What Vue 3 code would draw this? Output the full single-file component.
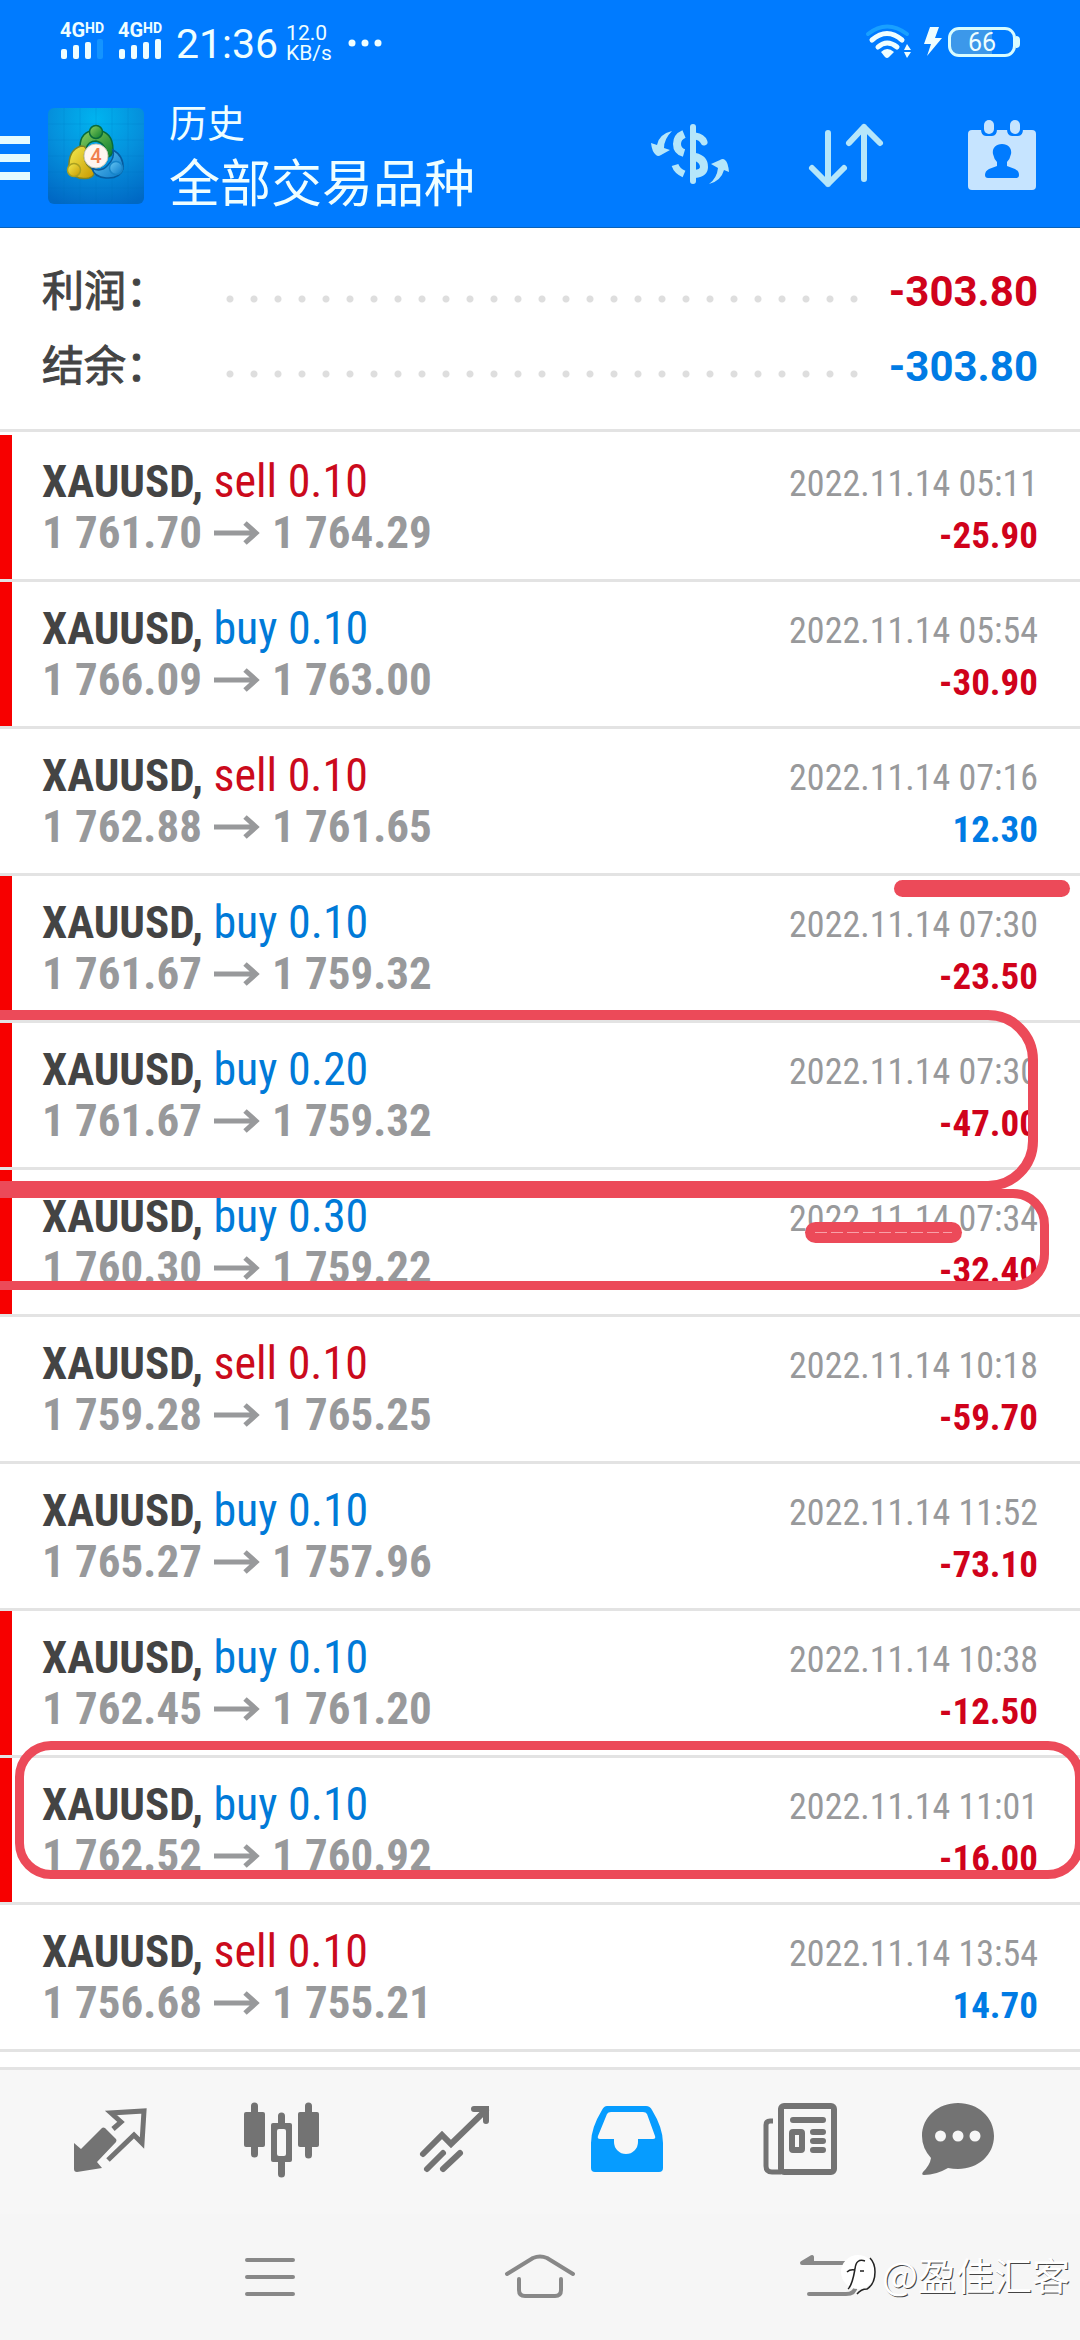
<script setup>
const summary = [
  { label: '利润：', value: '-303.80', tone: 'loss' },
  { label: '结余：', value: '-303.80', tone: 'gain' },
]

const deals = [
  { side: 'sell', lots: '0.10', open: '1 761.70', close: '1 764.29', time: '2022.11.14 05:11', profit: '-25.90', marked: true },
  { side: 'buy', lots: '0.10', open: '1 766.09', close: '1 763.00', time: '2022.11.14 05:54', profit: '-30.90', marked: true },
  { side: 'sell', lots: '0.10', open: '1 762.88', close: '1 761.65', time: '2022.11.14 07:16', profit: '12.30', marked: false },
  { side: 'buy', lots: '0.10', open: '1 761.67', close: '1 759.32', time: '2022.11.14 07:30', profit: '-23.50', marked: true },
  { side: 'buy', lots: '0.20', open: '1 761.67', close: '1 759.32', time: '2022.11.14 07:30', profit: '-47.00', marked: true },
  { side: 'buy', lots: '0.30', open: '1 760.30', close: '1 759.22', time: '2022.11.14 07:34', profit: '-32.40', marked: true },
  { side: 'sell', lots: '0.10', open: '1 759.28', close: '1 765.25', time: '2022.11.14 10:18', profit: '-59.70', marked: false },
  { side: 'buy', lots: '0.10', open: '1 765.27', close: '1 757.96', time: '2022.11.14 11:52', profit: '-73.10', marked: false },
  { side: 'buy', lots: '0.10', open: '1 762.45', close: '1 761.20', time: '2022.11.14 10:38', profit: '-12.50', marked: true },
  { side: 'buy', lots: '0.10', open: '1 762.52', close: '1 760.92', time: '2022.11.14 11:01', profit: '-16.00', marked: true },
  { side: 'sell', lots: '0.10', open: '1 756.68', close: '1 755.21', time: '2022.11.14 13:54', profit: '14.70', marked: false },
]

const tone = (profit) => (profit.startsWith('-') ? 'loss' : 'gain')
</script>

<template>
  <div class="screen">
    <header class="top">
      <div class="status">
        <div v-for="sim in 2" :key="sim" class="sim">
          <span class="net">4G<sup>HD</sup></span>
          <svg class="bars" viewBox="0 0 44 20" aria-hidden="true">
            <rect x="1" y="10" width="6" height="10" rx="2" />
            <rect x="13" y="6" width="6" height="14" rx="2" />
            <rect x="25" y="3" width="6" height="17" rx="2" />
            <rect x="37" y="0" width="6" height="20" rx="2" :class="{ faint: sim === 1 }" />
          </svg>
        </div>
        <span class="clock">21:36</span>
        <span class="speed"><span>12.0</span><span>KB/s</span></span>
        <svg class="more" viewBox="0 0 36 8" aria-hidden="true">
          <circle cx="4" cy="4" r="3.5" /><circle cx="17" cy="4" r="3.5" /><circle cx="30" cy="4" r="3.5" />
        </svg>
        <svg class="wifi" viewBox="0 0 48 36" aria-hidden="true">
          <g fill="none" stroke-linecap="round" stroke-width="5">
            <path d="M3 10Q22-5 42 10" stroke="#18a0ff" stroke-width="4" />
            <path d="M7 16Q22 3 37 16" stroke="#effeff" />
            <path d="M13 23Q22 15 32 23" stroke="#effeff" />
          </g>
          <path d="M16 28Q22 22 29 28L24 33Q22 35 20 33Z" />
          <path d="M39 26l3-6 4 6zM39 28h7l-4 6z" />
        </svg>
        <svg class="bolt" viewBox="0 0 18 30" aria-hidden="true"><path d="M6 0H15L11 11H18L3 29L7 17H0Z" /></svg>
        <span class="battery">66</span>
      </div>

      <div class="toolbar">
        <button class="menu" aria-label="菜单"><i></i><i></i><i></i></button>
        <svg class="logo" viewBox="0 0 96 96" aria-hidden="true">
          <defs>
            <radialGradient id="tile" cx="50%" cy="12%" r="95%">
              <stop offset="0" stop-color="#00b4f0" /><stop offset=".5" stop-color="#0590dc" /><stop offset="1" stop-color="#0068c4" />
            </radialGradient>
            <linearGradient id="green" x1="0" y1="0" x2="1" y2="1"><stop offset="0" stop-color="#8ed060" /><stop offset="1" stop-color="#087c2c" /></linearGradient>
            <linearGradient id="gold" x1="0" y1="0" x2="1" y2="1"><stop offset="0" stop-color="#f4ec50" /><stop offset="1" stop-color="#c89800" /></linearGradient>
            <linearGradient id="azure" x1="0" y1="0" x2="1" y2="1"><stop offset="0" stop-color="#68c8f4" /><stop offset="1" stop-color="#0878c8" /></linearGradient>
          </defs>
          <rect width="96" height="96" rx="6" fill="url(#tile)" />
          <path d="M16 0V96M32 0V96M48 0V96M64 0V96M80 0V96M0 16H96M0 32H96M0 48H96M0 64H96M0 80H96" stroke="#0070c0" stroke-opacity=".18" />
          <g stroke-width="1.5">
            <path d="M32 39Q32 23 48 22Q65 23 65 42Q64 49 59 49Q58 35 48 33Q40 33 38 41Z" fill="url(#green)" stroke="#096b3b" />
            <path d="M33 38Q20 42 21 60Q26 73 41 70Q48 68 45 62Q34 55 37 44Q40 38 33 38Z" fill="url(#gold)" stroke="#7f8424" />
            <path d="M65 42Q76 48 75 61Q72 71 58 70Q46 69 44 60Q53 65 60 57Q67 50 65 42Z" fill="url(#azure)" stroke="#075b9e" />
            <circle cx="48" cy="24" r="6.5" fill="url(#green)" stroke="#096b3b" />
            <circle cx="26" cy="62" r="6.5" fill="url(#gold)" stroke="#aaa020" />
            <circle cx="68" cy="60" r="6.5" fill="url(#azure)" stroke="#1684c8" />
          </g>
          <circle cx="48" cy="48" r="12" fill="#fff6f0" stroke="#c8c8b8" />
          <text x="48" y="55" text-anchor="middle" class="four">4</text>
        </svg>
        <div class="titles">
          <span class="subtitle">历史</span>
          <h1>全部交易品种</h1>
        </div>
        <button class="tool" aria-label="货币">
          <svg viewBox="0 0 96 96">
            <path d="M30 23Q17 26 15 37L9 35Q10 44 14 47Q16 49 19 47L28 42L22 40Q22 31 30 23ZM67 76Q79 73 82 62L87 64Q86 54 83 52Q81 50 78 52L69 56L76 60Q75 70 67 76Z" fill="#b5e6fa" />
            <g fill="none" stroke="#b5e6fa">
              <path d="M51 19V73" stroke-width="6" stroke-linecap="round" />
              <path d="M42 26Q35 29 35 36Q35 43 42 45M53 49Q62 51 62 59Q62 65 53 66" stroke-width="8" />
              <path d="M53 28Q60 29 62 34" stroke-width="7" stroke-linecap="round" />
              <path d="M33 57Q35 63 42 66" stroke-width="7" />
            </g>
          </svg>
        </button>
        <button class="tool" aria-label="排序">
          <svg viewBox="0 0 96 96" fill="none" stroke="#b5e6fa" stroke-width="6" stroke-linecap="round" stroke-linejoin="round">
            <path d="M30 25V76M14 60L30 76L46 60M66 71V19M51 35L66 19L82 35" />
          </svg>
        </button>
        <button class="tool" aria-label="日期">
          <svg viewBox="0 0 96 96">
            <rect x="14" y="22" width="68" height="60" rx="4" fill="#c6e4ff" />
            <path d="M27 21H43Q43 28 38 28H32Q27 28 27 21ZM53 21H69Q69 28 64 28H58Q53 28 53 21Z" fill="#007bff" />
            <rect x="30" y="12" width="10" height="14" rx="5" fill="#c6e4ff" />
            <rect x="56" y="12" width="10" height="14" rx="5" fill="#c6e4ff" />
            <path d="M48 36C55 36 58 41 57 46Q56 51 53 54V58L61 61Q65 63 65 67Q65 70 62 70H34Q31 70 31 67Q31 63 35 61L43 58V54Q40 51 39 46C38 41 41 36 48 36Z" fill="#007bff" />
          </svg>
        </button>
      </div>
    </header>

    <main>
      <dl class="summary">
        <div v-for="row in summary" :key="row.label">
          <dt>{{ row.label }}</dt>
          <dd :class="row.tone">{{ row.value }}</dd>
        </div>
      </dl>

      <ul class="deals">
        <li v-for="(deal, i) in deals" :key="i" :class="{ marked: deal.marked }">
          <div class="left">
            <p class="order"><b>XAUUSD,</b> <span :class="deal.side">{{ deal.side }} {{ deal.lots }}</span></p>
            <p class="prices">
              <span>{{ deal.open }}</span>
              <svg viewBox="0 0 46 24" aria-hidden="true"><path d="M0 12H42M31 2L42 12L31 22" /></svg>
              <span>{{ deal.close }}</span>
            </p>
          </div>
          <div class="right">
            <time>{{ deal.time }}</time>
            <strong :class="tone(deal.profit)">{{ deal.profit }}</strong>
          </div>
        </li>
      </ul>

      <div class="pen dash-a"></div>
      <div class="pen ring ring-a"></div>
      <div class="pen ring ring-b"></div>
      <div class="pen dash-b"></div>
      <div class="pen ring ring-c"></div>
    </main>

    <nav class="tabs">
      <button aria-label="行情">
        <svg viewBox="0 0 96 96">
          <path d="M12 49L19 55L40 34Q41 33 43 34L54 45Q55 46 54 48L35 68L40 74L15 78Q12 78 12 75Z" />
          <path d="M51 35L59 28L49 19L82 17L80 49L72 41L46 66" fill="none" stroke="#737373" stroke-width="5" />
        </svg>
      </button>
      <button aria-label="图表">
        <svg viewBox="0 0 96 96">
          <path d="M20.5 12V60M74.5 12V61M47.5 22V80" stroke="#737373" stroke-width="7" stroke-linecap="round" />
          <rect x="10" y="18" width="21" height="35" rx="2" /><rect x="64" y="18" width="21" height="35" rx="2" />
          <rect x="37" y="29" width="21" height="39" rx="2" /><rect x="43" y="35" width="9" height="27" rx="2" fill="#f7f7f7" />
        </svg>
      </button>
      <button aria-label="交易">
        <svg viewBox="0 0 96 96">
          <path d="M17 60L36 41L45 50L80 16M68 15H80V27M21 75L37 59M37 75L54 59" fill="none" stroke="#737373" stroke-width="6" stroke-linecap="round" />
        </svg>
      </button>
      <button aria-label="历史" aria-current="page">
        <svg viewBox="0 0 96 96">
          <path d="M29 12H68Q72 12 74 16Q85 34 85 49V74Q85 78 81 78H17Q13 78 13 74V49Q13 34 24 16Q26 12 29 12ZM33 18Q30 18 29 20L20 42Q19 45 22 45H36V48A12 12 0 0 0 60 48V45H75Q78 45 77 42L69 20Q68 18 65 18Z" fill="#069cff" fill-rule="evenodd" />
        </svg>
      </button>
      <button aria-label="新闻">
        <svg viewBox="0 0 96 96">
          <g fill="none" stroke="#737373" stroke-width="6">
            <rect x="31" y="12" width="53" height="66" rx="3" />
            <path d="M23 27H20Q16 27 16 31V72Q16 78 22 78H31" stroke-width="5" />
            <path d="M43 26H73M63 38H73M63 47H73M63 56H73" stroke-linecap="round" />
            <rect x="42" y="38" width="10" height="18" rx="1" />
          </g>
        </svg>
      </button>
      <button aria-label="消息">
        <svg viewBox="0 0 96 96">
          <path d="M36 9C56 9 72 23 72 42S56 75 36 75Q31 75 26 74Q14 81 2 81Q-1 81 1 78Q8 71 9 64Q0 54 0 42C0 23 16 9 36 9Z" />
          <g fill="#f7f7f7"><circle cx="18.5" cy="42" r="5.5" /><circle cx="36" cy="42" r="5.5" /><circle cx="53" cy="42" r="5.5" /></g>
        </svg>
      </button>
    </nav>

    <footer class="system">
      <button aria-label="最近任务">
        <svg viewBox="0 0 96 96"><path d="M25 31H71M25 48H71M25 65H71" /></svg>
      </button>
      <button aria-label="主屏幕">
        <svg viewBox="0 0 96 96"><path d="M15 45L41 29Q48 26 55 29L81 45M27 50V61Q27 67 33 67H63Q69 67 69 61V50" /></svg>
      </button>
      <button aria-label="返回">
        <svg viewBox="0 0 96 96"><path d="M42 34H84Q94 34 94 44V55Q94 65 84 65H47" /><path d="M40 34L50 28V34Z" fill="#888" /></svg>
      </button>
      <div class="watermark">
        <svg viewBox="0 0 40 44" aria-hidden="true">
          <circle cx="21" cy="20" r="17" fill="#fff" />
          <path d="M20 42Q24 37 30 37Q38 32 38 20Q38 11 33 6" fill="none" stroke="#222" stroke-width="1.5" />
          <path d="M28 9Q19 6 18 17M18 17Q15 34 11 37M10 20Q13 17 18 18M23 19H27" fill="none" stroke="#222" stroke-width="1.5" />
        </svg>
        <span>@盈佳汇客</span>
      </div>
    </footer>
  </div>
</template>

<style>
body {
  margin: 0;
  background: #fff;
}
</style>

<style scoped>
.screen {
  position: relative;
  overflow: hidden;
  background: #fff;
  color: #444;
  font-family: Roboto, "Noto Sans CJK SC", sans-serif;
}

button {
  padding: 0;
  border: 0;
  background: none;
  font: inherit;
}

svg {
  display: block;
  overflow: visible;
}

p, h1, ul, dl, dd {
  margin: 0;
  padding: 0;
}

.top {
  background: #007bff;
  box-shadow: inset 0 -1px #0a62b8;
  color: #effeff;
}

.status {
  display: flex;
  align-items: center;
  height: 84px;
  padding: 0 64px 0 60px;
}

.sim {
  width: 46px;
  margin-right: 12px;
  padding-bottom: 4px;
}

.net {
  display: flex;
  align-items: flex-start;
  font-size: 20px;
  font-weight: 700;
  line-height: 18px;
}

.net sup {
  font-size: 14px;
  line-height: 14px;
}

.bars {
  width: 44px;
  height: 20px;
}

.bars, .more, .wifi, .bolt {
  fill: #effeff;
}

.bars .faint {
  fill: #1494ff;
}

.clock {
  font-size: 41px;
  line-height: 48px;
  padding-top: 4px;
}

.speed {
  display: flex;
  flex-direction: column;
  margin-left: 8px;
  padding-top: 2px;
  font-size: 21px;
  line-height: 20px;
}

.more {
  width: 36px;
  height: 8px;
  margin: 2px auto 0 16px;
}

.wifi {
  width: 48px;
  height: 36px;
  margin-right: 11px;
}

.bolt {
  width: 18px;
  height: 30px;
  margin-right: 6px;
}

.battery {
  position: relative;
  box-sizing: border-box;
  width: 68px;
  height: 30px;
  border: 3px solid #d8fcff;
  border-radius: 11px;
  background: linear-gradient(90deg, #3c98ea 66%, #007bff 66%);
  font-size: 25px;
  line-height: 26px;
  text-align: center;
}

.battery::after {
  content: "";
  position: absolute;
  top: 6px;
  right: -7px;
  width: 4px;
  height: 12px;
  border-radius: 0 4px 4px 0;
  background: #d8fcff;
}

.toolbar {
  display: flex;
  align-items: center;
  height: 144px;
}

.menu {
  display: flex;
  flex-direction: column;
  gap: 10px;
  width: 30px;
  margin-right: 18px;
  padding-top: 4px;
}

.menu i {
  height: 8px;
  background: #e4fbff;
}

.logo {
  width: 96px;
  height: 96px;
}

.four {
  font-size: 20px;
  font-weight: 500;
  fill: #f08050;
}

.titles {
  flex: 1;
  margin-left: 25px;
  padding-top: 4px;
}

.subtitle {
  display: block;
  font-size: 38px;
  line-height: 54px;
}

.titles h1 {
  font-size: 51px;
  font-weight: 400;
  line-height: 68px;
}

.tool {
  display: flex;
  justify-content: center;
  width: 156px;
}

.tool svg, .tabs svg, .system button svg {
  width: 96px;
  height: 96px;
}

main {
  position: relative;
}

.summary {
  padding: 24px 42px 27px;
  border-bottom: 3px solid #e3e3e3;
}

.summary div {
  display: flex;
  align-items: center;
  justify-content: space-between;
  height: 75px;
  background: radial-gradient(circle at 12px 47px, #dedede 3px, transparent 4px) 176px 0 / 24px 75px repeat-x;
}

.summary dt, .summary dd {
  padding-top: 4px;
  background: #fff;
  font-size: 42px;
  line-height: 71px;
}

.summary dt {
  width: 176px;
  -webkit-text-stroke: 1px #444;
}

.summary dd {
  padding-left: 26px;
  font-weight: 700;
}

.loss {
  color: #d0021b;
}

.gain {
  color: #007be4;
}

.deals {
  padding-top: 3px;
  list-style: none;
  font-family: "Roboto Condensed", "Liberation Sans Narrow", Roboto, sans-serif;
}

.deals li {
  display: flex;
  justify-content: space-between;
  padding: 21px 42px 18px;
  border-bottom: 3px solid #e3e3e3;
}

.deals li.marked {
  background: linear-gradient(#f70000, #f70000) left top / 12px 100% no-repeat padding-box;
}

.order, .prices {
  font-size: 45px;
  line-height: 51px;
}

.order span {
  font-size: 46px;
}

.sell {
  color: #cb0a1c;
}

.buy {
  color: #007ad8;
}

.prices {
  display: flex;
  align-items: center;
  gap: 12px;
  color: #98999b;
  font-weight: 700;
}

.prices svg {
  width: 46px;
  height: 24px;
  fill: none;
  stroke: #98999b;
  stroke-width: 5;
}

.right {
  display: flex;
  flex-direction: column;
  align-items: flex-end;
  font-size: 37px;
  line-height: 51px;
  padding-top: 3px;
}

.right time {
  color: #98999b;
  font-size: 36px;
}

.pen {
  position: absolute;
  box-sizing: border-box;
  border-radius: 11px;
  background: #ec4a59;
}

.ring {
  background: none;
  border: 9px solid #ec4a59;
  border-radius: 36px;
}

.dash-a {
  top: 652px;
  right: 10px;
  width: 176px;
  height: 17px;
}

.ring-a {
  top: 782px;
  left: -60px;
  right: 42px;
  height: 181px;
  border-width: 10px;
  border-radius: 50px;
}

.ring-b {
  top: 961px;
  left: -60px;
  right: 31px;
  height: 101px;
}

.dash-b {
  top: 994px;
  right: 118px;
  width: 157px;
  height: 21px;
}

.dash-b::after {
  content: "";
  display: block;
  margin: 10px 10px 0;
  height: 1px;
  background: repeating-linear-gradient(90deg, #f8a0a8 0 12px, transparent 12px 16px);
}

.ring-c {
  top: 1513px;
  left: 15px;
  right: -4px;
  height: 138px;
}

.tabs {
  display: flex;
  align-items: center;
  height: 144px;
  margin-top: 15px;
  padding: 0 24px;
  border-top: 3px solid #e3e3e3;
  background: #f7f7f7;
}

.tabs button, .system button {
  flex: 1;
  display: flex;
  justify-content: center;
}

.tabs svg {
  fill: #737373;
}

.system {
  position: relative;
  display: flex;
  align-items: center;
  height: 126px;
  padding: 0 135px;
  background: #f6f6f6;
}

.system button svg {
  fill: none;
  stroke: #888;
  stroke-width: 4;
  stroke-linecap: round;
  stroke-linejoin: round;
}

.watermark {
  position: absolute;
  right: 10px;
  top: 33px;
  display: flex;
  align-items: center;
  gap: 5px;
  color: #fff;
  font-family: "Noto Sans CJK SC", sans-serif;
  font-size: 38px;
  line-height: 54px;
  text-shadow: 1px 1px 0 #444;
}

.watermark svg {
  width: 40px;
  height: 44px;
}
</style>
